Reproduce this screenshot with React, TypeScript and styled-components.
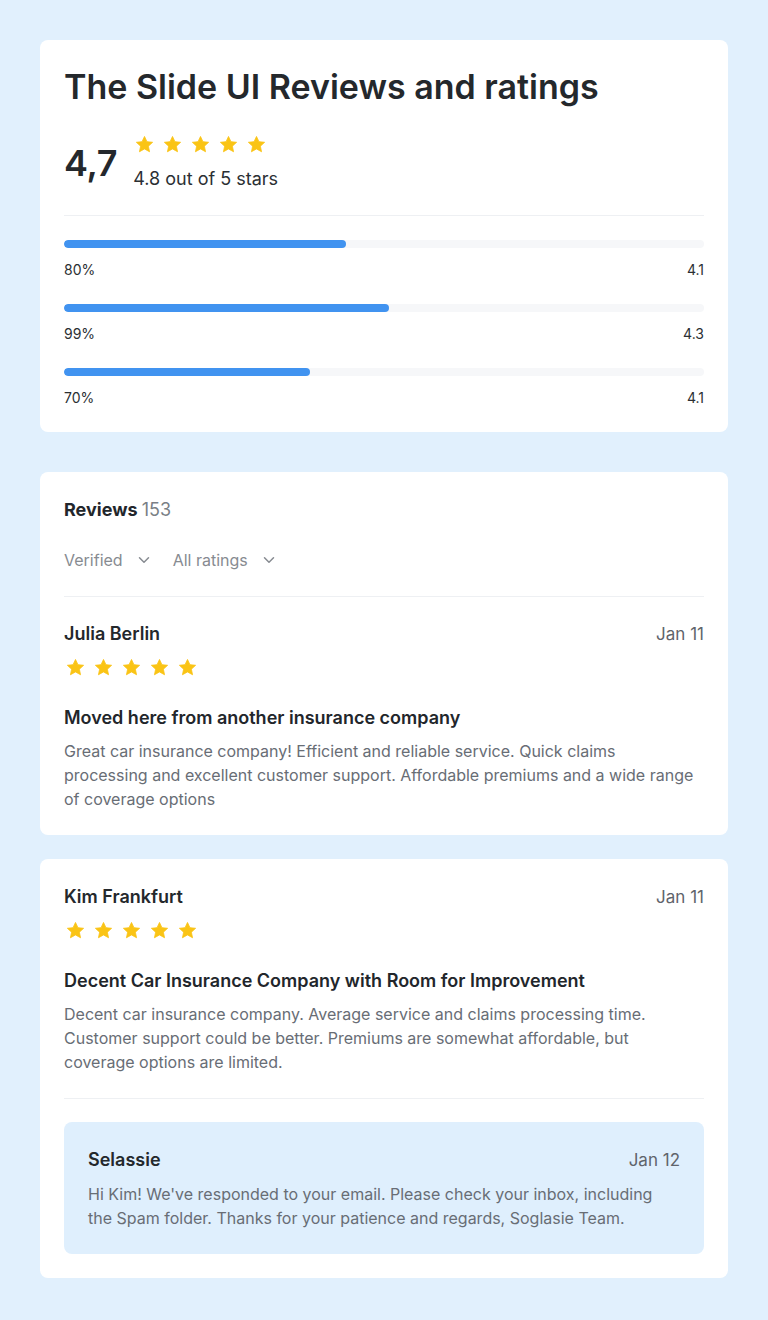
import React from "react";
import styled, { createGlobalStyle } from "styled-components";
import { ChevronDown } from "lucide-react";

const Global = createGlobalStyle`
  html, body { margin: 0; padding: 0; background: #e1f0fd; }
  body { font-family: Inter, "Noto Sans", sans-serif; color: #22262b; -webkit-font-smoothing: antialiased; }
  * { box-sizing: border-box; }
`;

const Page = styled.div`
  width: 768px;
  min-height: 1320px;
  padding: 40px;
  display: flex;
  flex-direction: column;
  background: #e1f0fd;
`;

const Card = styled.section<{ $mt?: number }>`
  background: #ffffff;
  border-radius: 8px;
  padding: 24px;
  margin-top: ${(p) => p.$mt ?? 0}px;
  display: flex;
  flex-direction: column;
`;

const Title = styled.h1`
  margin: 0;
  font-size: 34px;
  line-height: 46px;
  font-weight: 600;
  letter-spacing: 0;
  color: #24282c;
`;

const Summary = styled.div`
  display: flex;
  align-items: center;
  gap: 16px;
  margin-top: 25px;
`;

const BigScore = styled.div`
  font-size: 36px;
  font-weight: 600;
  letter-spacing: -0.3px;
  line-height: 44px;
  color: #24282c;
`;

const SummaryText = styled.div`
  display: flex;
  flex-direction: column;
  gap: 13px;
`;

const OutOf = styled.div`
  font-size: 18px;
  line-height: 24px;
  color: #2b2f33;
`;

const StarRow = styled.div`
  display: flex;
  gap: 9px;
  padding-left: 2px;
`;

const Divider = styled.hr<{ $top: number; $bottom: number }>`
  border: 0;
  height: 1px;
  background: #eef0f3;
  margin: ${(p) => p.$top}px 0 ${(p) => p.$bottom}px;
  width: 100%;
`;

const Bars = styled.div`
  display: flex;
  flex-direction: column;
  gap: 24px;
`;

const BarBlock = styled.div`
  display: flex;
  flex-direction: column;
  gap: 12px;
`;

const Track = styled.div`
  height: 8px;
  border-radius: 4px;
  background: #f6f7f9;
  overflow: hidden;
`;

const Fill = styled.div`
  height: 100%;
  border-radius: 4px;
  background: #4193f0;
`;

const BarLabels = styled.div`
  display: flex;
  justify-content: space-between;
  font-size: 14px;
  line-height: 20px;
  color: #2b2f33;
`;

const ReviewsHead = styled.div`
  font-size: 18px;
  line-height: 28px;
  font-weight: 700;
  color: #22262b;
  span {
    font-weight: 400;
    color: #7a7f86;
  }
`;

const Filters = styled.div`
  display: flex;
  gap: 20px;
  margin-top: 24px;
`;

const Filter = styled.button`
  display: flex;
  align-items: center;
  gap: 12px;
  background: none;
  border: 0;
  padding: 0;
  font-family: inherit;
  font-size: 16px;
  line-height: 24px;
  color: #878b91;
  cursor: pointer;
`;

const ReviewHeader = styled.div`
  display: flex;
  justify-content: space-between;
  align-items: center;
`;

const Name = styled.div`
  font-size: 18px;
  line-height: 28px;
  font-weight: 600;
  color: #24282c;
`;

const DateText = styled.div`
  font-size: 17px;
  line-height: 24px;
  color: #5f646b;
`;

const ReviewStars = styled(StarRow)`
  margin-top: 10px;
`;

const ReviewTitle = styled.h3`
  margin: 28px 0 0;
  font-size: 18px;
  line-height: 26px;
  font-weight: 600;
  color: #22262b;
`;

const Body = styled.p`
  margin: 8px 0 0;
  padding-right: 4px;
  font-size: 16px;
  line-height: 24px;
  color: #686d75;
`;

const Reply = styled.div`
  background: #dfeffd;
  border-radius: 8px;
  padding: 24px;
`;

const ReplyBody = styled(Body)`
  margin-top: 8px;
  padding-right: 0;
`;

const Star = ({ size = 20 }: { size?: number }) => (
  <svg width={size} height={size} viewBox="0 0 24 24">
    <path
      d="M12 1.8l3.1 6.6 7.2.8-5.4 4.9 1.5 7.1L12 17.6l-6.4 3.6 1.5-7.1L1.7 9.2l7.2-.8z"
      fill="#fac415"
      stroke="#fac415"
      strokeWidth="1"
      strokeLinejoin="round"
    />
  </svg>
);

const Stars = ({ as: Row = StarRow }: { as?: typeof StarRow }) => (
  <Row>
    {[0, 1, 2, 3, 4].map((i) => (
      <Star key={i} size={19} />
    ))}
  </Row>
);

const bars = [
  { pct: "80%", val: "4.1", w: 44 },
  { pct: "99%", val: "4.3", w: 50.8 },
  { pct: "70%", val: "4.1", w: 38.5 },
];

export default function App() {
  return (
    <>
      <Global />
      <Page>
        <Card>
          <Title>The Slide UI Reviews and ratings</Title>
          <Summary>
            <BigScore>4,7</BigScore>
            <SummaryText>
              <Stars />
              <OutOf>4.8 out of 5 stars</OutOf>
            </SummaryText>
          </Summary>
          <Divider $top={24} $bottom={24} />
          <Bars>
            {bars.map((b) => (
              <BarBlock key={b.pct}>
                <Track>
                  <Fill style={{ width: `${b.w}%` }} />
                </Track>
                <BarLabels>
                  <span>{b.pct}</span>
                  <span>{b.val}</span>
                </BarLabels>
              </BarBlock>
            ))}
          </Bars>
        </Card>

        <Card $mt={40}>
          <ReviewsHead>
            Reviews <span>153</span>
          </ReviewsHead>
          <Filters>
            <Filter>
              Verified <ChevronDown size={18} strokeWidth={2} />
            </Filter>
            <Filter>
              All ratings <ChevronDown size={18} strokeWidth={2} />
            </Filter>
          </Filters>
          <Divider $top={24} $bottom={23} />
          <ReviewHeader>
            <Name>Julia Berlin</Name>
            <DateText>Jan 11</DateText>
          </ReviewHeader>
          <Stars as={ReviewStars} />
          <ReviewTitle>Moved here from another insurance company</ReviewTitle>
          <Body>
            Great car insurance company! Efficient and reliable service. Quick claims processing and
            excellent customer support. Affordable premiums and a wide range of coverage options
          </Body>
        </Card>

        <Card $mt={24}>
          <ReviewHeader>
            <Name>Kim Frankfurt</Name>
            <DateText>Jan 11</DateText>
          </ReviewHeader>
          <Stars as={ReviewStars} />
          <ReviewTitle>Decent Car Insurance Company with Room for Improvement</ReviewTitle>
          <Body>
            Decent car insurance company. Average service and claims processing time. Customer support
            could be better. Premiums are somewhat affordable, but coverage options are limited.
          </Body>
          <Divider $top={24} $bottom={23} />
          <Reply>
            <ReviewHeader>
              <Name>Selassie</Name>
              <DateText>Jan 12</DateText>
            </ReviewHeader>
            <ReplyBody>
              Hi Kim! We've responded to your email. Please check your inbox, including the Spam
              folder. Thanks for your patience and regards, Soglasie Team.
            </ReplyBody>
          </Reply>
        </Card>
      </Page>
    </>
  );
}
